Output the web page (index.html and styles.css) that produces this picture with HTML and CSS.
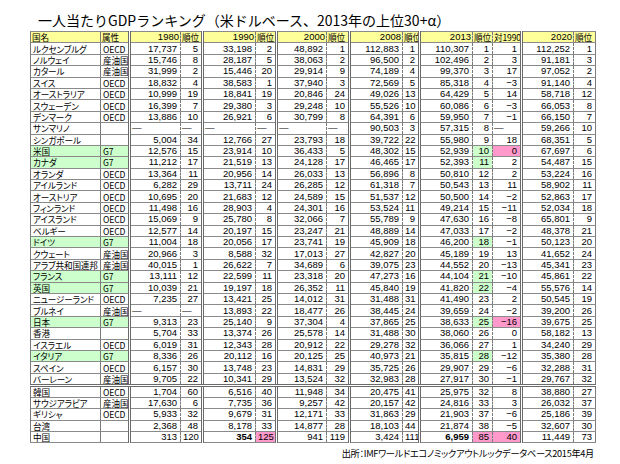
FILE: index.html
```html
<!DOCTYPE html>
<html lang="ja">
<head>
<meta charset="utf-8">
<title>一人当たりGDPランキング</title>
<link rel="stylesheet" href="styles.css">
</head>
<body>
<div class="page">
<h1 class="title">一人当たりGDPランキング（米ドルベース、2013年の上位30+α）</h1>
<table class="rank">
<colgroup>
<col class="c-n w-n"><col class="c-a w-a">
<col class="c-v w-v1"><col class="c-r w-r1">
<col class="c-v w-v2"><col class="c-r w-r2">
<col class="c-v w-v3"><col class="c-r w-r3">
<col class="c-v w-v4"><col class="c-r w-r4">
<col class="c-v w-v5"><col class="c-r w-r5"><col class="c-r w-d">
<col class="c-v w-v6"><col class="c-r w-r6">
</colgroup>
<thead>
<tr class="hd"><td class="jp">国名</td><td class="jp">属性</td><td>1980</td><td class="jp">順位</td><td>1990</td><td class="jp">順位</td><td>2000</td><td class="jp">順位</td><td>2008</td><td class="jp">順位</td><td>2013</td><td class="jp">順位</td><td class="jp">対1990</td><td>2020</td><td class="jp">順位</td></tr>
</thead>
<tbody>
<tr><td>ルクセンブルグ</td><td>OECD</td><td>17,737</td><td>5</td><td>33,198</td><td>2</td><td>48,892</td><td>1</td><td>112,883</td><td>1</td><td>110,307</td><td>1</td><td>1</td><td>112,252</td><td>1</td></tr>
<tr><td>ノルウェイ</td><td>産油国</td><td>15,746</td><td>8</td><td>28,187</td><td>5</td><td>38,063</td><td>2</td><td>96,500</td><td>2</td><td>102,496</td><td>2</td><td>3</td><td>91,181</td><td>3</td></tr>
<tr><td>カタール</td><td>産油国</td><td>31,999</td><td>2</td><td>15,446</td><td>20</td><td>29,914</td><td>9</td><td>74,189</td><td>4</td><td>99,370</td><td>3</td><td>17</td><td>97,052</td><td>2</td></tr>
<tr><td>スイス</td><td>OECD</td><td>18,832</td><td>4</td><td>38,583</td><td>1</td><td>37,940</td><td>3</td><td>72,569</td><td>5</td><td>85,318</td><td>4</td><td>−3</td><td>91,140</td><td>4</td></tr>
<tr><td>オーストラリア</td><td>OECD</td><td>10,999</td><td>19</td><td>18,841</td><td>19</td><td>20,846</td><td>24</td><td>49,026</td><td>13</td><td>64,429</td><td>5</td><td>14</td><td>58,718</td><td>12</td></tr>
<tr><td>スウェーデン</td><td>OECD</td><td>16,399</td><td>7</td><td>29,380</td><td>3</td><td>29,248</td><td>10</td><td>55,526</td><td>10</td><td>60,086</td><td>6</td><td>−3</td><td>66,053</td><td>8</td></tr>
<tr><td>デンマーク</td><td>OECD</td><td>13,886</td><td>10</td><td>26,921</td><td>6</td><td>30,799</td><td>8</td><td>64,391</td><td>6</td><td>59,950</td><td>7</td><td>−1</td><td>66,150</td><td>7</td></tr>
<tr><td>サンマリノ</td><td></td><td class="x">—</td><td class="x">—</td><td class="x">—</td><td class="x">—</td><td class="x">—</td><td class="x">—</td><td>90,503</td><td>3</td><td>57,315</td><td>8</td><td class="x">—</td><td>59,266</td><td>10</td></tr>
<tr><td>シンガポール</td><td></td><td>5,004</td><td>34</td><td>12,766</td><td>27</td><td>23,793</td><td>18</td><td>39,722</td><td>22</td><td>55,980</td><td>9</td><td>18</td><td>68,351</td><td>5</td></tr>
<tr><td class="g">米国</td><td class="g">G7</td><td>12,576</td><td>15</td><td>23,914</td><td>10</td><td>36,433</td><td>5</td><td>48,302</td><td>15</td><td>52,939</td><td class="g">10</td><td class="p">0</td><td>67,697</td><td>6</td></tr>
<tr><td class="g">カナダ</td><td class="g">G7</td><td>11,212</td><td>17</td><td>21,519</td><td>13</td><td>24,128</td><td>17</td><td>46,465</td><td>17</td><td>52,393</td><td class="g">11</td><td>2</td><td>54,487</td><td>15</td></tr>
<tr><td>オランダ</td><td>OECD</td><td>13,364</td><td>11</td><td>20,956</td><td>14</td><td>26,033</td><td>13</td><td>56,896</td><td>8</td><td>50,810</td><td>12</td><td>2</td><td>53,224</td><td>16</td></tr>
<tr><td>アイルランド</td><td>OECD</td><td>6,282</td><td>29</td><td>13,711</td><td>24</td><td>26,285</td><td>12</td><td>61,318</td><td>7</td><td>50,543</td><td>13</td><td>11</td><td>58,902</td><td>11</td></tr>
<tr><td>オーストリア</td><td>OECD</td><td>10,695</td><td>20</td><td>21,683</td><td>12</td><td>24,589</td><td>15</td><td>51,537</td><td>12</td><td>50,500</td><td>14</td><td>−2</td><td>52,863</td><td>17</td></tr>
<tr><td>フィンランド</td><td>OECD</td><td>11,498</td><td>16</td><td>28,903</td><td>4</td><td>24,301</td><td>16</td><td>53,524</td><td>11</td><td>49,214</td><td>15</td><td>−11</td><td>52,034</td><td>18</td></tr>
<tr><td>アイスランド</td><td>OECD</td><td>15,069</td><td>9</td><td>25,780</td><td>8</td><td>32,066</td><td>7</td><td>55,789</td><td>9</td><td>47,630</td><td>16</td><td>−8</td><td>65,801</td><td>9</td></tr>
<tr><td>ベルギー</td><td>OECD</td><td>12,577</td><td>14</td><td>20,197</td><td>15</td><td>23,247</td><td>21</td><td>48,889</td><td>14</td><td>47,033</td><td>17</td><td>−2</td><td>48,378</td><td>21</td></tr>
<tr><td class="g">ドイツ</td><td class="g">G7</td><td>11,004</td><td>18</td><td>20,056</td><td>17</td><td>23,741</td><td>19</td><td>45,909</td><td>18</td><td>46,200</td><td class="g">18</td><td>−1</td><td>50,123</td><td>20</td></tr>
<tr><td>クウェート</td><td>産油国</td><td>20,966</td><td>3</td><td>8,588</td><td>32</td><td>17,013</td><td>27</td><td>42,827</td><td>20</td><td>45,189</td><td>19</td><td>13</td><td>41,652</td><td>24</td></tr>
<tr><td>アラブ共和国連邦</td><td>産油国</td><td>40,015</td><td>1</td><td>26,622</td><td>7</td><td>34,689</td><td>6</td><td>39,075</td><td>23</td><td>44,552</td><td>20</td><td>−13</td><td>45,341</td><td>23</td></tr>
<tr><td class="g">フランス</td><td class="g">G7</td><td>13,111</td><td>12</td><td>22,599</td><td>11</td><td>23,318</td><td>20</td><td>47,273</td><td>16</td><td>44,104</td><td class="g">21</td><td>−10</td><td>45,861</td><td>22</td></tr>
<tr><td class="g">英国</td><td class="g">G7</td><td>10,039</td><td>21</td><td>19,197</td><td>18</td><td>26,352</td><td>11</td><td>45,840</td><td>19</td><td>41,820</td><td class="g">22</td><td>−4</td><td>55,576</td><td>14</td></tr>
<tr><td>ニュージーランド</td><td>OECD</td><td>7,235</td><td>27</td><td>13,421</td><td>25</td><td>14,012</td><td>31</td><td>31,488</td><td>31</td><td>41,490</td><td>23</td><td>2</td><td>50,545</td><td>19</td></tr>
<tr><td>ブルネイ</td><td>産油国</td><td class="x">—</td><td class="x">—</td><td>13,893</td><td>22</td><td>18,477</td><td>26</td><td>38,445</td><td>24</td><td>39,659</td><td>24</td><td>−2</td><td>39,200</td><td>26</td></tr>
<tr><td class="g">日本</td><td class="g">G7</td><td>9,313</td><td>23</td><td>25,140</td><td>9</td><td>37,304</td><td>4</td><td>37,865</td><td>25</td><td>38,633</td><td class="g">25</td><td class="p">−16</td><td>39,675</td><td>25</td></tr>
<tr><td>香港</td><td></td><td>5,704</td><td>33</td><td>13,374</td><td>26</td><td>25,578</td><td>14</td><td>31,488</td><td>30</td><td>38,060</td><td>26</td><td>0</td><td>58,182</td><td>13</td></tr>
<tr><td>イスラエル</td><td>OECD</td><td>6,019</td><td>31</td><td>12,343</td><td>28</td><td>20,912</td><td>22</td><td>29,278</td><td>32</td><td>36,066</td><td>27</td><td>1</td><td>34,240</td><td>29</td></tr>
<tr><td class="g">イタリア</td><td class="g">G7</td><td>8,336</td><td>26</td><td>20,112</td><td>16</td><td>20,125</td><td>25</td><td>40,973</td><td>21</td><td>35,815</td><td class="g">28</td><td>−12</td><td>35,380</td><td>28</td></tr>
<tr><td>スペイン</td><td>OECD</td><td>6,157</td><td>30</td><td>13,748</td><td>23</td><td>14,831</td><td>29</td><td>35,725</td><td>26</td><td>29,907</td><td>29</td><td>−6</td><td>32,288</td><td>31</td></tr>
<tr><td>バーレーン</td><td>産油国</td><td>9,705</td><td>22</td><td>10,341</td><td>29</td><td>13,524</td><td>32</td><td>32,983</td><td>28</td><td>27,917</td><td>30</td><td>−1</td><td>29,767</td><td>32</td></tr>
<tr class="sep"><td>韓国</td><td>OECD</td><td>1,704</td><td>60</td><td>6,516</td><td>40</td><td>11,948</td><td>34</td><td>20,475</td><td>41</td><td>25,975</td><td>32</td><td>8</td><td>38,880</td><td>27</td></tr>
<tr><td>サウジアラビア</td><td>産油国</td><td>17,630</td><td>6</td><td>7,735</td><td>36</td><td>9,257</td><td>42</td><td>20,157</td><td>42</td><td>24,816</td><td>33</td><td>3</td><td>26,032</td><td>37</td></tr>
<tr><td>ギリシャ</td><td>OECD</td><td>5,933</td><td>32</td><td>9,679</td><td>31</td><td>12,171</td><td>33</td><td>31,863</td><td>29</td><td>21,903</td><td>37</td><td>−6</td><td>25,186</td><td>39</td></tr>
<tr><td>台湾</td><td></td><td>2,368</td><td>48</td><td>8,178</td><td>33</td><td>14,877</td><td>28</td><td>18,103</td><td>44</td><td>21,874</td><td>38</td><td>−5</td><td>32,607</td><td>30</td></tr>
<tr><td>中国</td><td></td><td>313</td><td>120</td><td class="b">354</td><td class="p">125</td><td>941</td><td>119</td><td>3,424</td><td>111</td><td class="b">6,959</td><td class="p">85</td><td class="p">40</td><td>11,449</td><td>73</td></tr>
</tbody>
</table>
<p class="source">出所：IMFワールドエコノミックアウトルックデータベース2015年4月</p>
</div>
</body>
</html>
```
FILE: styles.css
```css
html, body {
  margin: 0;
  padding: 0;
  background: #ffffff;
  color: #000000;
}

.page {
  padding: 10px 0 0 30px;
}

.title {
  margin: 0 0 1px 8px;
  height: 20px;
  font-family: "Noto Sans CJK JP", sans-serif;
  font-size: 14px;
  font-weight: 400;
  line-height: 20px;
  white-space: nowrap;
}

.rank {
  border-collapse: collapse;
  table-layout: fixed;
  width: 565px;
  border: 1px solid #7a7a7a;
  font-family: "Liberation Sans Narrow", "Liberation Sans", "Noto Sans CJK JP", sans-serif;
  font-size: 9.5px;
}

.c-n, .c-a { border-left: 1px solid #7a7a7a; }
.c-v { border-left: 3px double #6a6a6a; }
.c-r { border-left: 1px dashed #7a7a7a; }

.w-n { width: 70px; }
.w-a { width: 29px; }
.w-v1 { width: 51px; }
.w-r1 { width: 22px; }
.w-v2 { width: 53px; }
.w-r2 { width: 21px; }
.w-v3 { width: 50px; }
.w-r3 { width: 23px; }
.w-v4 { width: 53px; }
.w-r4 { width: 17px; }
.w-v5 { width: 53px; }
.w-r5 { width: 20px; }
.w-d { width: 29px; }
.w-v6 { width: 52px; }
.w-r6 { width: 22px; }

.rank tr { height: 11.4px; }

.rank td {
  padding: 0 3px 0 2px;
  border-top: 1px solid #8a8a8a;
  border-bottom: 1px solid #8a8a8a;
  line-height: 10px;
  text-align: right;
  white-space: nowrap;
  overflow: hidden;
}

.rank td:nth-child(1),
.rank td:nth-child(2) {
  text-align: left;
  font-family: "Noto Sans CJK JP", sans-serif;
  font-feature-settings: "palt";
  font-size: 8.6px;
  letter-spacing: -0.15px;
  padding-left: 2px;
  padding-right: 0;
}

.rank .hd td {
  background: #ffff99;
}

.rank .hd td.jp {
  text-align: left;
  font-family: "Liberation Sans Narrow", "Noto Sans CJK JP", sans-serif;
  font-feature-settings: "palt";
  font-size: 8.6px;
  letter-spacing: -0.15px;
  padding-left: 1px;
  padding-right: 0;
}

.rank .hd td:nth-child(3),
.rank .hd td:nth-child(5),
.rank .hd td:nth-child(7),
.rank .hd td:nth-child(9),
.rank .hd td:nth-child(11),
.rank .hd td:nth-child(14) {
  padding-right: 1px;
}

.rank tr.sep td {
  border-top: 3px double #6a6a6a;
}

.rank td.x {
  text-align: left;
  padding-left: 1px;
}

.rank td.g { background: #ccffcc; }
.rank td.p { background: #ff99cc; }
.rank td.b { font-weight: 700; }

.source {
  width: 565px;
  margin: 4px 0 0 0;
  padding-right: 1px;
  box-sizing: border-box;
  text-align: right;
  font-family: "Noto Sans CJK JP", sans-serif;
  font-feature-settings: "palt";
  font-size: 9.2px;
  letter-spacing: -0.3px;
  line-height: 12px;
}
```
